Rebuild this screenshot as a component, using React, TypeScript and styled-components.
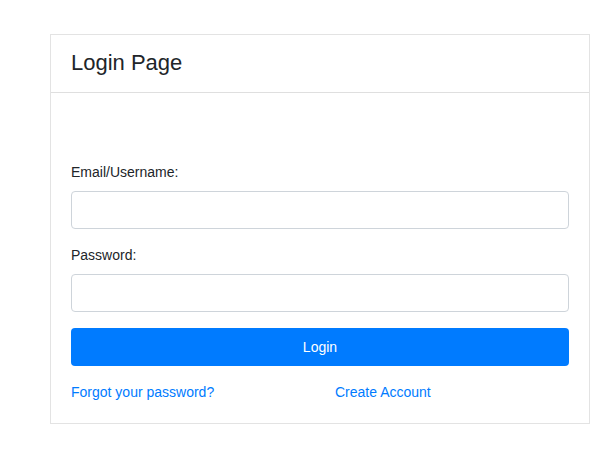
import React, { useState } from 'react'
import styled, { createGlobalStyle } from 'styled-components'

const GlobalStyle = createGlobalStyle`
	* { box-sizing: border-box; }
	body {
		margin: 0;
		background: #fff;
		font-family: "Liberation Sans", Arial, sans-serif;
		color: #212529;
	}
`

function App() {
	const [email, setEmail] = useState("")
	const [password, setPassword] = useState("")

	return (
		<Page>
			<GlobalStyle />
			<Card>
				<Header>
					<Title>Login Page</Title>
				</Header>
				<Body>
					<Field>
						<Label htmlFor="email">Email/Username:</Label>
						<Input id="email" value={email} onChange={(e) => setEmail(e.target.value)} />
					</Field>
					<Field>
						<Label htmlFor="password">Password:</Label>
						<Input id="password" type="password" value={password} onChange={(e) => setPassword(e.target.value)} />
					</Field>
					<LoginButton type="button">Login</LoginButton>
					<Links>
						<LinkText href="#">Forgot your password?</LinkText>
						<LinkText href="#">Create Account</LinkText>
					</Links>
				</Body>
			</Card>
		</Page>
	)
}

const Page = styled.main`
	padding: 34px 10px 20px 50px;
`

const Card = styled.section`
	width: 540px;
	border: 1px solid #e3e3e3;
	background: #fff;
`

const Header = styled.header`
	height: 58px;
	display: flex;
	align-items: center;
	padding: 0 20px;
	border-bottom: 1px solid #dfdfdf;
`

const Title = styled.h1`
	margin: 0;
	font-size: 22px;
	font-weight: 400;
	line-height: 1.2;
`

const Body = styled.div`
	padding: 69px 20px 20px;
	display: flex;
	flex-direction: column;
`

const Field = styled.div`
	display: flex;
	flex-direction: column;
	margin-bottom: 16px;
`

const Label = styled.label`
	font-size: 14px;
	line-height: 21px;
	margin-bottom: 8px;
`

const Input = styled.input`
	height: 38px;
	width: 100%;
	border: 1px solid #ced4da;
	border-radius: 4px;
	padding: 6px 12px;
	font-size: 14px;
	font-family: inherit;
	outline: none;
`

const LoginButton = styled.button`
	height: 38px;
	width: 100%;
	border: none;
	border-radius: 4px;
	background: #007bff;
	color: #fff;
	font-size: 14px;
	font-family: inherit;
	cursor: pointer;
`

const Links = styled.div`
	display: grid;
	grid-template-columns: 264px auto;
	margin-top: 16px;
	line-height: 21px;
`

const LinkText = styled.a`
	font-size: 14px;
	color: #007bff;
	text-decoration: none;
	justify-self: start;
`

export default App
